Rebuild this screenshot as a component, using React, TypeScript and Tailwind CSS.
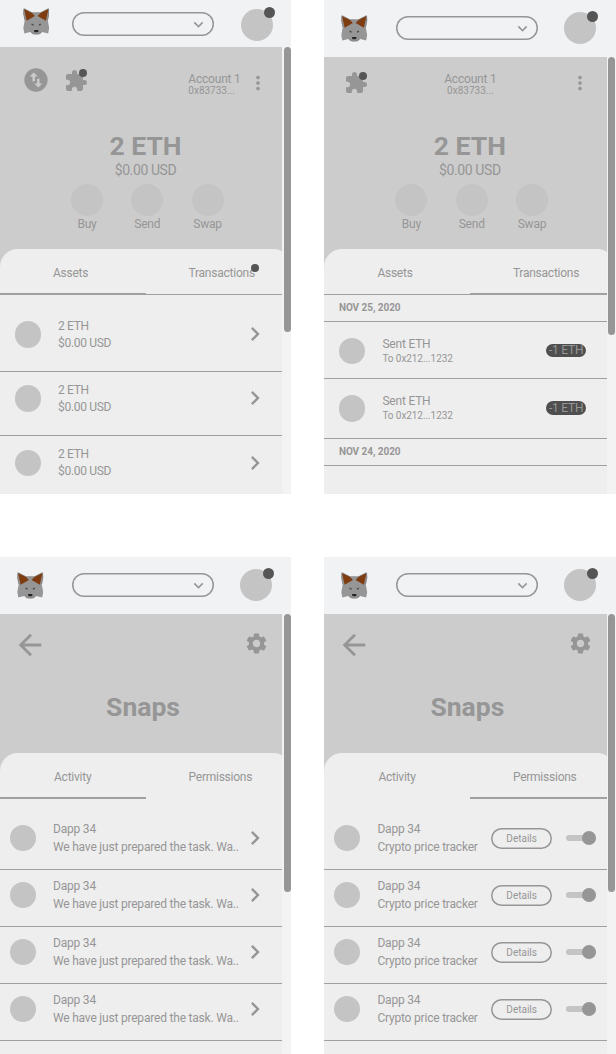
import type { ReactNode } from "react";
import {
  MdArrowBack,
  MdChevronRight,
  MdExtension,
  MdKeyboardArrowDown,
  MdMoreVert,
  MdSettings,
} from "react-icons/md";

function Fox() {
  return (
    <svg viewBox="0 0 80 81" className="h-[27px] w-[26.5px] shrink-0">
      <path
        d="M2 1 L28 14 H52 L78 1 L79 17 L75 38 L79 60 L76 77 L58 72 L51 79 H29 L22 72 L4 77 L1 60 L5 38 L1 17 Z"
        fill="#969696"
      />
      <path d="M3 3 L26 13 L36 24 L11 38 Z M77 3 L54 13 L44 24 L69 38 Z" fill="#7f3c10" />
      <path d="M3 2 L2 16 L6 36 M77 2 L78 16 L74 36 M4 2 L27 14 H53 L76 2" stroke="#7c7876" strokeWidth="2" fill="none" />
      <path d="M25 72 L34 78 H46 L55 72" stroke="#868686" strokeWidth="3" fill="none" />
      <path d="M25 47 l7 1 v5 l-6 -2z M55 47 l-7 1 v5 l6 -2z" fill="#4c4c4c" />
      <path d="M34 66 H46 L47 70 L44 73 H36 L33 70Z" fill="#252525" />
    </svg>
  );
}

function SwapCircle() {
  return (
    <svg viewBox="0 0 24 24" className="mt-[19px] size-7 shrink-0" fill="currentColor">
      <path d="M12 2C6.48 2 2 6.48 2 12s4.48 10 10 10 10-4.48 10-10S17.52 2 12 2zM6.5 9L10 5.5 13.5 9H11v4H9V9H6.5zm11 6L14 18.5 10.5 15H13v-4h2v4h2.5z" />
    </svg>
  );
}

function Puzzle() {
  return (
    <div className="relative size-6 shrink-0">
      <MdExtension className="size-6" />
      <span className="absolute left-[15px] top-[0.5px] size-2 rounded-full bg-[#555]" />
    </div>
  );
}

function Header({ compact = false }: { compact?: boolean }) {
  return (
    <header
      className={
        compact
          ? "flex h-[47px] shrink-0 items-start bg-[#f1f2f4] pl-[22.5px] pt-2"
          : "flex h-[57px] shrink-0 items-start bg-[#f1f2f4] pl-[17px] pt-[15px]"
      }
    >
      <Fox />
      <div
        className={
          "flex h-6 w-[142px] items-center justify-end rounded-full pr-[6px] shadow-[inset_0_0_0_1.5px_#969696] " +
          (compact ? "ml-[23px] mt-[3.5px]" : "ml-[28.5px] mt-[0.5px]")
        }
      >
        <MdKeyboardArrowDown className="mt-0.5 size-[19px]" />
      </div>
      <div
        className={
          "relative size-8 rounded-full bg-[#c4c4c4] " +
          (compact ? "ml-[27px] mt-[0.5px]" : "-mt-[3px] ml-[26px]")
        }
      >
        <span className="absolute -top-[1.5px] left-[23px] size-[11px] rounded-full bg-[#555]" />
      </div>
    </header>
  );
}

function Screen({ compact, thumb, children }: { compact?: boolean; thumb: string; children: ReactNode }) {
  return (
    <section className="flex h-full flex-col overflow-hidden">
      <Header compact={compact} />
      <div className="flex min-h-0 flex-1 bg-[#f3f3f3]">
        <div className="flex w-[282.3px] shrink-0 flex-col overflow-hidden bg-[#ccc]">{children}</div>
        <div className="pl-[1.7px]">
          <div className={"w-[6.6px] rounded-full bg-[#969696] " + thumb} />
        </div>
      </div>
    </section>
  );
}

function Account({ centered = false }: { centered?: boolean }) {
  return (
    <div className={centered ? "text-center" : ""}>
      <div className="text-[12px] leading-[14px] tracking-[-0.2px]">Account 1</div>
      <div className="text-[10px] leading-[10px]">0x83733...</div>
    </div>
  );
}

function Balance() {
  return (
    <div className="h-[119px] shrink-0">
      <div className="w-[291px] text-center text-[26.5px] font-bold leading-8">2 ETH</div>
      <div className="w-[291px] text-center text-[14px] leading-4 tracking-[-0.4px]">$0.00 USD</div>
      <div className="mt-[6px] flex gap-[28.3px] pl-[71px]">
        {["Buy", "Send", "Swap"].map((label) => (
          <div key={label} className="flex w-8 flex-col items-center">
            <span className="size-8 rounded-full bg-[#c4c4c4]" />
            <span className="text-[12px] leading-4 tracking-[-0.2px]">{label}</span>
          </div>
        ))}
      </div>
    </div>
  );
}

function Tabs({ labels, active, ruled, notify }: { labels: string[]; active: number; ruled?: boolean; notify?: boolean }) {
  const idle = ruled ? "border-b border-[#a0a0a0]" : "";
  const on = "border-b-2 border-[#a0a0a0]";
  return (
    <div className="flex h-[46px] w-[291px] shrink-0 text-[12px] leading-4 tracking-[-0.24px]">
      <div className={"w-[145.5px] pt-4 " + (ruled ? "pl-[53px] " : "pl-[54px] ") + (active === 0 ? on : idle)}>
        {labels[0]}
      </div>
      <div className={"flex-1 pl-[43px] pt-4 " + (active === 1 ? on : idle)}>
        <span className="relative">
          {labels[1]}
          {notify && <span className="absolute -right-1 -top-[2px] size-2 rounded-full bg-[#555]" />}
        </span>
      </div>
    </div>
  );
}

function Sheet({ children }: { children: ReactNode }) {
  return <div className="flex min-h-0 w-[291px] flex-1 flex-col rounded-t-[18px] bg-[#eee]">{children}</div>;
}

function Snaps({ active, children }: { active: number; children: ReactNode }) {
  return (
    <>
      <div className="h-[139px] shrink-0">
        <div className="flex h-[76.5px] items-start justify-between pl-[13px] pr-[13.5px] pt-[13.5px]">
          <MdArrowBack className="size-[34px]" />
          <MdSettings className="mt-[3px] size-[25px]" />
        </div>
        <h2 className="w-[286px] text-center text-[26.5px] font-bold leading-8">Snaps</h2>
      </div>
      <Sheet>
        <Tabs labels={["Activity", "Permissions"]} active={active} />
        <div className="flex flex-col pt-[13.5px]">{children}</div>
      </Sheet>
    </>
  );
}

function Dapp({ detail, children }: { detail: string; children: ReactNode }) {
  return (
    <div className="flex h-[57px] shrink-0 items-start border-b border-[#a0a0a0] pl-[9.5px] pt-3">
      <span className="size-[26.5px] rounded-full bg-[#c4c4c4]" />
      <div className="-mt-[3.4px] ml-[17px] w-[190px] whitespace-nowrap text-[12px] leading-[17.5px] tracking-[-0.2px]">
        <div>Dapp 34</div>
        <div>{detail}</div>
      </div>
      {children}
    </div>
  );
}

function Transfer({ row }: { row: string }) {
  return (
    <div className={"flex shrink-0 items-start border-b border-[#a0a0a0] pl-[14.5px] " + row}>
      <span className="size-[26.5px] rounded-full bg-[#c4c4c4]" />
      <div className="-mt-[2px] ml-[17px] w-[163.5px]">
        <div className="text-[12px] leading-4 tracking-[-0.2px]">Sent ETH</div>
        <div className="text-[10px] leading-[14px] tracking-[-0.07px]">To 0x212...1232</div>
      </div>
      <span className="mt-[6px] flex h-[13.5px] w-[40.5px] items-center justify-center rounded-full bg-[#4f4f4f] text-[12px] leading-[13px] tracking-[-0.2px]">
        -1 ETH
      </span>
    </div>
  );
}

function DateRow({ children }: { children: ReactNode }) {
  return (
    <div className="h-[27px] shrink-0 border-b border-[#a0a0a0] pl-[14.5px] pt-[6px] text-[10px] font-bold leading-[14px] tracking-[-0.05px]">
      {children}
    </div>
  );
}

export default function App() {
  return (
    <main
      className="grid h-[1054px] w-[616px] grid-cols-[291.2px_291.6px] grid-rows-[494.4px_496.7px] gap-x-[33.2px] gap-y-[62.9px] overflow-hidden bg-white text-[#969696]"
      style={{ fontFamily: "Roboto, sans-serif" }}
    >
      <Screen compact thumb="h-[285px]">
        <div className="flex h-[83px] shrink-0 items-start pl-[22.3px]">
          <SwapCircle />
          <div className="ml-[13.5px] mt-[21.5px]">
            <Puzzle />
          </div>
          <div className="ml-[100.5px] mt-[25px] w-[59px]">
            <Account />
          </div>
          <MdMoreVert className="mt-[24.5px] size-[22px]" />
        </div>
        <Balance />
        <Sheet>
          <Tabs labels={["Assets", "Transactions"]} active={0} ruled notify />
          {[0, 1, 2].map((i) => (
            <div
              key={i}
              className={
                "flex shrink-0 items-start border-b border-[#a0a0a0] pl-[14.5px] " +
                (i === 0 ? "h-[76.5px] pt-[26px]" : "h-[64.5px] pt-[13.5px]")
              }
            >
              <span className="size-[26.5px] rounded-full bg-[#c4c4c4]" />
              <div className="-mt-[3.5px] ml-[17px] w-[182.5px] text-[12px] leading-[17.3px] tracking-[-0.3px]">
                <div>2 ETH</div>
                <div>$0.00 USD</div>
              </div>
              <MdChevronRight className="-mt-[1px] size-7" />
            </div>
          ))}
        </Sheet>
      </Screen>

      <Screen thumb="h-[278px]">
        <div className="flex h-[73px] shrink-0 items-start pl-[19.5px]">
          <div className="mt-3.5">
            <Puzzle />
          </div>
          <div className="ml-[72.5px] mt-[15px] w-[60px]">
            <Account centered />
          </div>
          <MdMoreVert className="ml-[68.5px] mt-[14.5px] size-[22px]" />
        </div>
        <Balance />
        <Sheet>
          <Tabs labels={["Assets", "Transactions"]} active={1} ruled />
          <DateRow>NOV 25, 2020</DateRow>
          <Transfer row="h-[57px] pt-[15.5px]" />
          <Transfer row="h-[59.5px] pt-[16.3px]" />
          <DateRow>NOV 24, 2020</DateRow>
        </Sheet>
      </Screen>

      <Screen thumb="h-[278px]">
        <Snaps active={0}>
          {[0, 1, 2, 3].map((i) => (
            <Dapp key={i} detail="We have just prepared the task. Wa..">
              <MdChevronRight className="-mt-[0.5px] ml-[-2px] size-7" />
            </Dapp>
          ))}
        </Snaps>
      </Screen>

      <Screen thumb="h-[278px]">
        <Snaps active={1}>
          {[0, 1, 2, 3].map((i) => (
            <Dapp key={i} detail="Crypto price tracker">
              <div className="-ml-[76px] mt-[3px] flex items-center">
                <button className="h-[21px] w-[60.5px] rounded-full text-[10px] leading-[21px] shadow-[inset_0_0_0_1.5px_#969696]">
                  Details
                </button>
                <div className="ml-[14px] flex h-[6px] w-[30px] items-center justify-end rounded-full bg-[#c4c4c4]">
                  <span className="size-[14px] rounded-full bg-[#969696]" />
                </div>
              </div>
            </Dapp>
          ))}
        </Snaps>
      </Screen>
    </main>
  );
}
